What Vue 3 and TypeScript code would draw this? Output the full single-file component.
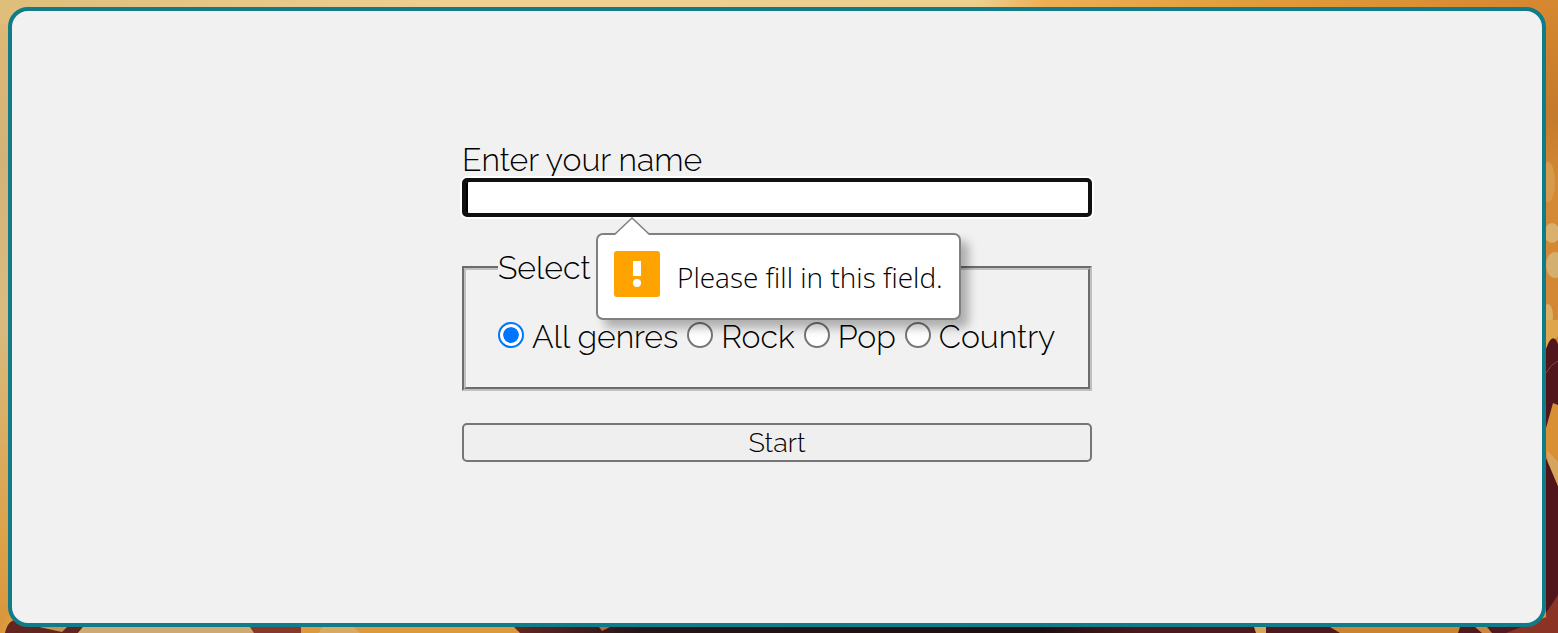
<script setup lang="ts">
import { ref } from 'vue'

const genres: string[] = ['All genres', 'Rock', 'Pop', 'Country']
const genre = ref<string>('All genres')
const name = ref<string>('')
</script>

<template>
  <div class="page">
    <div class="backdrop" aria-hidden="true">
      <svg class="edge edge-right" viewBox="0 0 12 633" preserveAspectRatio="none">
        <defs>
          <linearGradient id="amber" x1="0" y1="0" x2="0" y2="1">
            <stop offset="0" stop-color="#d5882f" />
            <stop offset="0.18" stop-color="#c47a2b" />
            <stop offset="0.3" stop-color="#d48a35" />
            <stop offset="1" stop-color="#cf8130" />
          </linearGradient>
        </defs>
        <rect width="12" height="633" fill="url(#amber)" />
        <ellipse cx="2" cy="182" rx="7" ry="20" fill="#d69a4c" />
        <ellipse cx="6" cy="233" rx="8" ry="10" fill="#d9b16c" />
        <ellipse cx="9" cy="265" rx="9" ry="13" fill="#d4b070" />
        <ellipse cx="2" cy="316" rx="5" ry="12" fill="#d8af63" />
        <path d="M0 320H12V336L0 349Z" fill="#e0a64b" />
        <path d="M0 349Q5 334 10 340L12 344V633H0Z" fill="#50161b" />
        <path d="M0 373Q5 364 12 361" fill="none" stroke="#8d4235" />
        <path d="M0 428L7 403L12 405V486L0 458Z" fill="#d98f34" />
        <path d="M1 450L12 462V486L2 462Z" fill="#d6a45c" />
        <path d="M0 613L12 595V633H0Z" fill="#8b3426" />
      </svg>
      <svg class="edge edge-bottom" viewBox="0 0 1558 40" preserveAspectRatio="none">
        <defs>
          <linearGradient id="maroon">
            <stop offset="0" stop-color="#64271f" />
            <stop offset="0.12" stop-color="#24151a" />
            <stop offset="0.5" stop-color="#1c0e11" />
            <stop offset="0.6" stop-color="#4b191c" />
            <stop offset="1" stop-color="#531a1d" />
          </linearGradient>
        </defs>
        <path d="M8 20H520V40H0Z" fill="#dc993d" />
        <path d="M5 40Q8 26 18 27L58 35L68 33L83 34L78 40Z" fill="#642521" />
        <path d="M39 34H67L62 39Z" fill="#c49452" />
        <path d="M83 34H250L254 40H78Z" fill="#ccaa72" />
        <path d="M250 34H301V40H254Z" fill="#87382b" />
        <path d="M323 34H354L360 40H318Z" fill="#d9aa63" />
        <path d="M514 34H1558V40H520Z" fill="url(#maroon)" />
        <path d="M599 34H610L602 38Z" fill="#b66a39" />
        <path d="M1254 34H1266V40H1256Z" fill="#d9a557" />
        <path d="M1330 34H1460L1458 40H1340Z" fill="#cc8433" />
        <path d="M1475 34H1487L1492 40H1482Z" fill="#cc8640" />
        <path d="M1506 40L1524 33L1546 24L1558 14V40Z" fill="#8b3426" />
      </svg>
    </div>

    <main class="card">
      <form class="form" novalidate @submit.prevent>
        <div class="field">
          <label class="label" for="name">Enter your name</label>
          <input id="name" v-model="name" class="name" type="text" required aria-describedby="name-error" />
          <div id="name-error" class="tip" role="alert">
            <svg class="arrow" viewBox="0 0 36 18" aria-hidden="true">
              <path d="M1 18L18 1L35 18Z" fill="#fff" />
              <path d="M1 17L18 1L35 17" fill="none" stroke="#808080" stroke-width="1.5" />
            </svg>
            <svg class="warn" viewBox="0 0 46 46" aria-hidden="true">
              <rect width="46" height="46" rx="3" fill="#ffa300" />
              <path d="M19 10H27V25H19Z" fill="#fff" />
              <circle cx="23" cy="32" r="4" fill="#fff" />
            </svg>
            <span>Please fill in this field.</span>
          </div>
        </div>

        <fieldset class="genres">
          <legend class="legend">Select</legend>
          <div class="options">
            <label v-for="item in genres" :key="item" class="option">
              <input v-model="genre" class="radio" type="radio" name="genre" :value="item" />
              <span>{{ item }}</span>
            </label>
          </div>
        </fieldset>

        <button class="start" type="submit">Start</button>
      </form>
    </main>
  </div>
</template>

<style>
body {
  margin: 0;
}
</style>

<style scoped>
.page {
  position: relative;
  box-sizing: border-box;
  display: flex;
  min-height: 100vh;
  padding: 7px 12px 6px 8px;
  color: #000;
  font-family: Raleway, Lato, sans-serif;
  font-size: 32px;
  font-weight: 300;
  line-height: 38px;
}

.backdrop {
  position: absolute;
  inset: 0;
  overflow: hidden;
  background:
    linear-gradient(90deg, #dfbd7b 0, #efd091 30%, #ecce8d 63%, #eeaf54 67%, #e29d3b 80%, #d5862f 100%) top / 100% 24px no-repeat,
    linear-gradient(#dfba77 0, #d4b277 25%, #d9bb80 50%, #dda14a 85%, #d9953a 100%);
}

.edge {
  position: absolute;
  right: 0;
  bottom: 0;
}

.edge-right {
  width: 12px;
  height: 100%;
}

.edge-bottom {
  width: 100%;
  height: 40px;
}

.card {
  position: relative;
  box-sizing: border-box;
  display: flex;
  flex: 1;
  align-items: center;
  justify-content: center;
  border: 4px solid #107b89;
  border-radius: 20px;
  background: #f1f1f1;
}

.form {
  display: flex;
  flex-direction: column;
  gap: 32px;
  width: 630px;
  max-width: 100%;
  padding-bottom: 30px;
}

.field {
  position: relative;
  display: flex;
  flex-direction: column;
}

.label {
  line-height: 36px;
}

.name {
  box-sizing: border-box;
  width: 100%;
  height: 39px;
  padding: 2px 4px;
  border: 4px solid #101010;
  border-radius: 5px;
  outline: none;
  background: #fff;
  box-shadow: 0 0 0 2px #fff, inset 2px 0 #000;
  font: inherit;
  font-size: 27px;
  line-height: 31px;
}

.tip {
  position: absolute;
  z-index: 1;
  top: 91px;
  left: 134px;
  box-sizing: border-box;
  display: flex;
  align-items: center;
  gap: 17px;
  height: 87px;
  padding: 0 16px;
  border: 2px solid #808080;
  border-radius: 7px;
  background: #fff;
  box-shadow: 8px 8px 10px rgba(0, 0, 0, 0.28);
  font-family: "Segoe UI", "Open Sans", sans-serif;
  font-size: 28px;
  white-space: nowrap;
}

.arrow {
  position: absolute;
  top: -18px;
  left: 16px;
  width: 36px;
  height: 18px;
}

.warn {
  flex: none;
  width: 46px;
  height: 46px;
  margin-bottom: 6px;
}

.genres {
  min-width: 0;
  margin: 0;
  padding: 30px 32px;
  border: 4px groove #c0c0c0;
}

.legend {
  padding: 0 8px 0 0;
}

.options {
  display: flex;
  flex-wrap: wrap;
  gap: 9px;
  line-height: 40px;
}

.option {
  display: flex;
  gap: 8px;
}

.radio {
  box-sizing: border-box;
  width: 26px;
  height: 26px;
  margin: 5px 0 0;
  padding: 3px;
  border: 2px solid #767676;
  border-radius: 50%;
  appearance: none;
  background: #fff;
}

.radio:checked {
  border-color: #0075ff;
  background: #0075ff content-box;
  box-shadow: inset 0 0 0 3px #fff;
}

.start {
  height: 39px;
  padding: 0;
  border: 2px solid #767676;
  border-radius: 5px;
  background: #efefef;
  color: #000;
  font: inherit;
  font-size: 27px;
  line-height: 35px;
}
</style>
